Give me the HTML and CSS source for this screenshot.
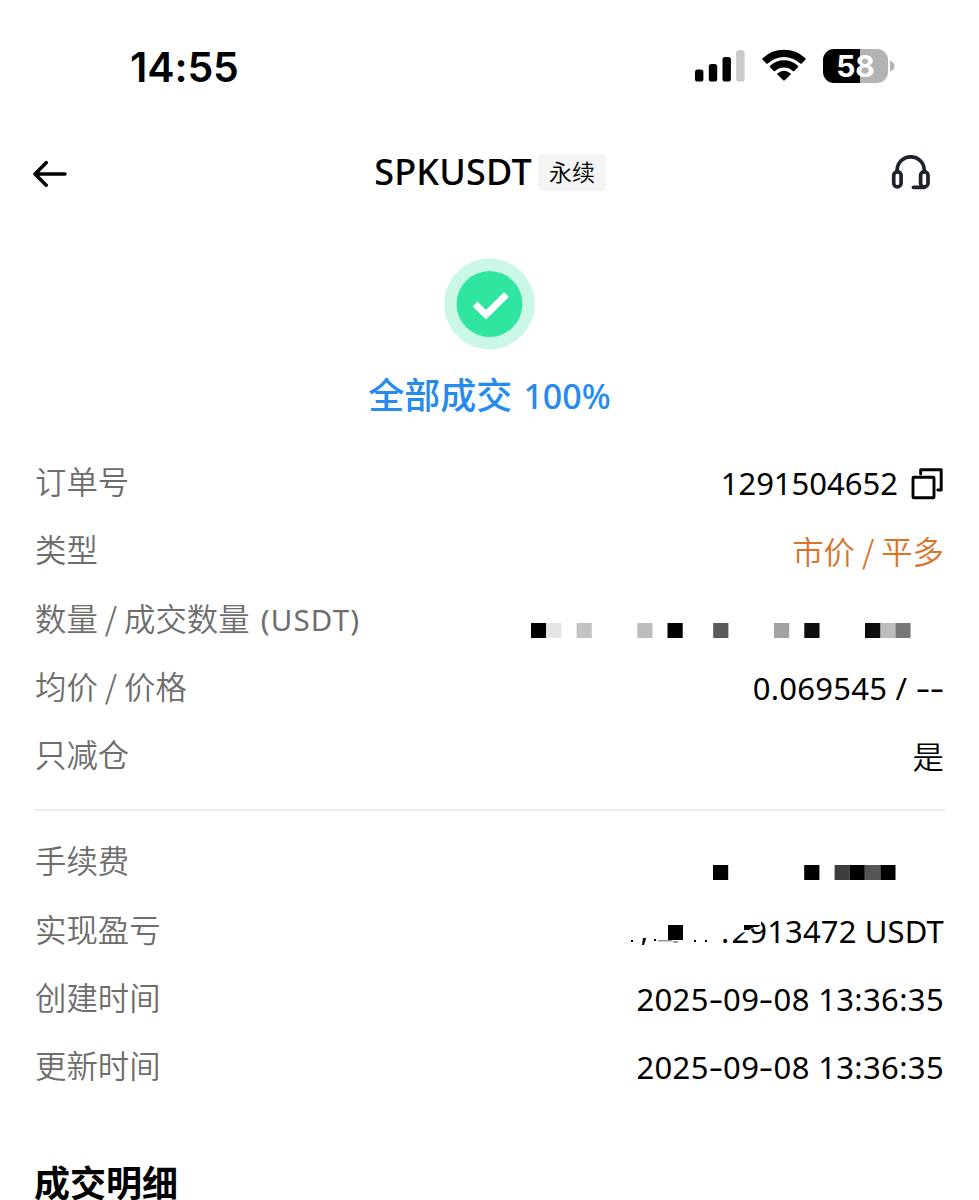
FILE: index.html
```html
<!DOCTYPE html>
<html lang="zh-CN">
<head>
<meta charset="utf-8">
<title>SPKUSDT 永续</title>
<link rel="stylesheet" href="styles.css">
</head>
<body>
<main class="screen">
  <header class="status">
    <span class="clock">14:55</span>
    <div class="indicators">
      <svg class="signal" width="50" height="32" viewBox="0 0 50 32">
        <rect x="0" y="19.5" width="8.4" height="12" rx="2.6"/><rect x="13.8" y="14" width="8.4" height="17.5" rx="2.6"/><rect x="27.5" y="7" width="8.4" height="24.5" rx="2.6"/><rect x="41.2" y="0.3" width="8.4" height="31.2" rx="2.6" fill="#cacaca"/>
      </svg>
      <svg class="wifi" width="44" height="33" viewBox="0 0 44 33">
        <path d="M0.6 9.2A31 31 0 0 1 43.4 9.2Q44 10 43.4 10.7L39.6 14.4Q38.9 15 38.2 14.4A24 24 0 0 0 5.8 14.4Q5.1 15 4.4 14.4L.6 10.7Q0 10 .6 9.2Z"/>
        <path d="M8 16.8A20.3 20.3 0 0 1 36 16.8Q36.6 17.5 36 18.2L32.2 21.9Q31.5 22.5 30.8 21.9A13 13 0 0 0 13.2 21.9Q12.5 22.5 11.8 21.9L8 18.2Q7.4 17.5 8 16.8Z"/>
        <path d="M15.4 24.4A9.5 9.5 0 0 1 28.6 24.4Q29.1 25 28.6 25.6L22.8 31.2Q22 31.9 21.2 31.2L15.4 25.6Q14.9 25 15.4 24.4Z"/>
      </svg>
      <div class="battery"><span class="charge">58</span></div>
      <svg class="cap" width="5" height="12" viewBox="0 0 5 12"><path d="M0 0.5Q4.5 2 4.5 6T0 11.5Z" fill="#b3b3b3"/></svg>
    </div>
  </header>
  <nav class="nav">
    <svg class="back" width="36" height="30" viewBox="0 0 36 30" fill="none" stroke="#000" stroke-width="3.5" stroke-linecap="round" stroke-linejoin="round"><path d="M32 15H2M13.2 3.7L2 15L13.2 26.3"/></svg>
    <div class="pair"><h1 class="symbol">SPKUSDT</h1><span class="tag">永续</span></div>
    <svg class="support" width="40" height="36" viewBox="0 0 40 36" fill="none" stroke="#1d222c" stroke-width="3.7" stroke-linecap="round" stroke-linejoin="round"><path d="M6.1 17V15.4A13.6 13.6 0 0 1 33.3 15.4V17M33.3 32.3H22.4"/><rect x="2.7" y="16.7" width="7.4" height="15.2" rx="3.7"/><rect x="29.6" y="16.7" width="7.4" height="15.2" rx="3.7"/></svg>
  </nav>
  <section class="result">
    <svg width="92" height="92" viewBox="0 0 92 92"><circle cx="45.5" cy="46" r="45.4" fill="#cbf8e6"/><circle cx="45.5" cy="46" r="33" fill="#2fe5a0"/><path d="M31 46L42 56.7L62.5 36.5" fill="none" stroke="#fff" stroke-width="6.7"/></svg>
    <p class="filled">全部成交 <span class="percent">100%</span></p>
  </section>
  <dl class="list">
    <div class="row"><dt>订单号</dt><dd><span class="order">1291504652</span><svg class="copy" width="33" height="32" viewBox="0 0 33 32" fill="none" stroke="#000" stroke-width="2.9" stroke-linejoin="round" stroke-linecap="round"><rect x="2" y="9.3" width="21" height="20.4" rx=".8"/><path d="M9.7 6V1.8H30.2V22H26.8"/></svg></dd></div>
    <div class="row"><dt>类型</dt><dd class="side">市价 / 平多</dd></div>
    <div class="row"><dt>数量 / 成交数量 <span class="unit">(USDT)</span></dt><dd><svg class="mosaic" width="380" height="15" viewBox="0 0 380 15"><path d="M0 0h15.2v15H0zM136.5 0h15.2v15h-15.2z"/><path d="M15.2 0h15.2v15H15.2z" fill="#e5e5e5"/><path d="M45.6 0h15.2v15H45.6z" fill="#c3c3c3"/><path d="M106.3 0h15.2v15h-15.2zM349 0h15.2v15H349z" fill="#bdbdbd"/><path d="M182.2 0h15.2v15h-15.2z" fill="#5a5a5a"/><path d="M243 0h15.2v15H243z" fill="#a2a2a2"/><path d="M273.3 0h15.2v15h-15.2zM334 0h15.2v15H334z" fill="#0e0e0e"/><path d="M364.4 0h15.2v15h-15.2z" fill="#777"/></svg></dd></div>
    <div class="row"><dt>均价 / 价格</dt><dd class="price">0.069545 / <span class="dash">-</span><span class="dash">-</span></dd></div>
    <div class="row"><dt>只减仓</dt><dd class="cjk">是</dd></div>
  </dl>
  <dl class="list second">
    <div class="row"><dt>手续费</dt><dd><svg class="mosaic fee" width="183" height="15" viewBox="0 0 183 15"><path d="M0 0h15.2v15H0zM91.2 0h15.2v15H91.2zM136.6 0h15.2v15h-15.2zM167.3 0h15.2v15h-15.2z"/><path d="M121.6 0h15.2v15h-15.2z" fill="#3d3d3d"/><path d="M152 0h15.2v15H152z" fill="#555"/></svg></dd></div>
    <div class="row"><dt>实现盈亏</dt><dd class="pnl"><span class="point">.</span>2913472 USDT<svg class="cover" width="150" height="34" viewBox="0 0 150 34"><path fill="#fff" d="M98 0H131V9L124 12L112 17L103 24H98Z"/><path d="M38 9h15v15H38zM114 9H131L128 11L124 11L119 14H114zM13 22h3.2l-2.2 7h-2zM1 24h2v2H1zM24 23h2v2h-2zM64 24h2v2h-2zM75 24h2v2h-2z"/><path d="M28 24h14v1.5H28zM42 25h7l-2 2h-3z" fill="#999"/></svg></dd></div>
    <div class="row"><dt>创建时间</dt><dd class="date">2025<span class="dash">-</span>09<span class="dash">-</span>08 13:36:35</dd></div>
    <div class="row"><dt>更新时间</dt><dd class="date">2025<span class="dash">-</span>09<span class="dash">-</span>08 13:36:35</dd></div>
  </dl>
  <h2 class="details">成交明细</h2>
</main>
</body>
</html>
```
FILE: styles.css
```css
* { box-sizing: border-box; }
body, h1, h2, p, dl, dd { margin: 0; }
body { background: #fff; color: #000; font-family: "Noto Sans", "Noto Sans CJK SC", sans-serif; }
.screen { height: 1200px; overflow: hidden; }
svg { display: block; flex: none; }
.status { height: 132px; padding: 0 84px 0 130px; display: flex; justify-content: space-between; align-items: center; }
.clock { font: 600 41px/50px Inter, sans-serif; letter-spacing: -.1px; padding-top: 1px; }
.indicators { display: flex; align-items: center; }
.wifi { margin: -1px 0 0 17px; }
.battery { width: 65px; height: 34px; margin: -1px 0 0 17px; border-radius: 11px; display: flex; align-items: center; justify-content: center; background: linear-gradient(90deg, #000 37.5px, #b3b3b3 37.5px); }
.charge { color: #fff; font: 700 30px/34px Inter, sans-serif; padding-top: 1px; }
.cap { margin-left: 2px; }
.nav { height: 80px; padding: 0 48px 0 33px; display: grid; grid-template-columns: 44px 1fr 40px; align-items: center; }
.back { margin-top: 4px; }
.support { margin-top: 2px; }
.pair { display: flex; align-items: center; justify-content: center; gap: 6px; margin-left: 12px; }
.symbol { font: 500 36px/44px "Noto Sans", sans-serif; letter-spacing: .2px; padding-bottom: 1px; }
.tag { width: 68px; height: 37px; border-radius: 5px; background: #f4f4f4; font: 350 23px/34px "Noto Sans CJK SC", sans-serif; text-align: center; }
.result { height: 237px; padding-top: 46px; display: flex; flex-direction: column; align-items: center; }
.filled { margin-top: 18px; font: 500 36px/50px "Noto Sans CJK SC", sans-serif; color: #258bee; white-space: nowrap; }
.percent { font-family: "Noto Sans", sans-serif; font-size: 34px; margin-left: 3px; }
.row { height: 68.25px; padding: 0 35px 0 35px; display: flex; align-items: center; justify-content: space-between; white-space: nowrap; }
dt { font: 350 31.4px/46px "Noto Sans CJK SC", sans-serif; color: #6d6d6d; padding-bottom: 4px; }
dd { position: relative; display: flex; align-items: center; font: 400 31px/48px "Noto Sans", "Noto Sans CJK SC", sans-serif; white-space: pre; }
.unit { font: 400 29.5px/40px "Noto Sans", sans-serif; letter-spacing: 1.2px; margin-left: 4px; }
.side, .cjk { font: 350 31.4px/48px "Noto Sans CJK SC", sans-serif; }
.side { color: #d97328; }
.copy { margin: 2px 0 0 13px; }
.mosaic { margin: 21px 33px 0 0; }
.fee { margin-right: 48px; }
.price { letter-spacing: .25px; }
.date { letter-spacing: .35px; }
.pnl { letter-spacing: .15px; }
.point { margin-right: 2px; }
.dash { display: inline-block; margin: 0 2px; transform: translateY(-1px) scaleX(1.45); }
.second { border-top: 2px solid #eee; margin: 19px 34px 0; padding-top: 17px; }
.second .row { padding: 0 1px; }
.cover { position: absolute; right: 164px; top: 9px; }
.details { margin-top: 62px; padding-left: 34px; font: 700 36px/36px "Noto Sans CJK SC", sans-serif; }
```
